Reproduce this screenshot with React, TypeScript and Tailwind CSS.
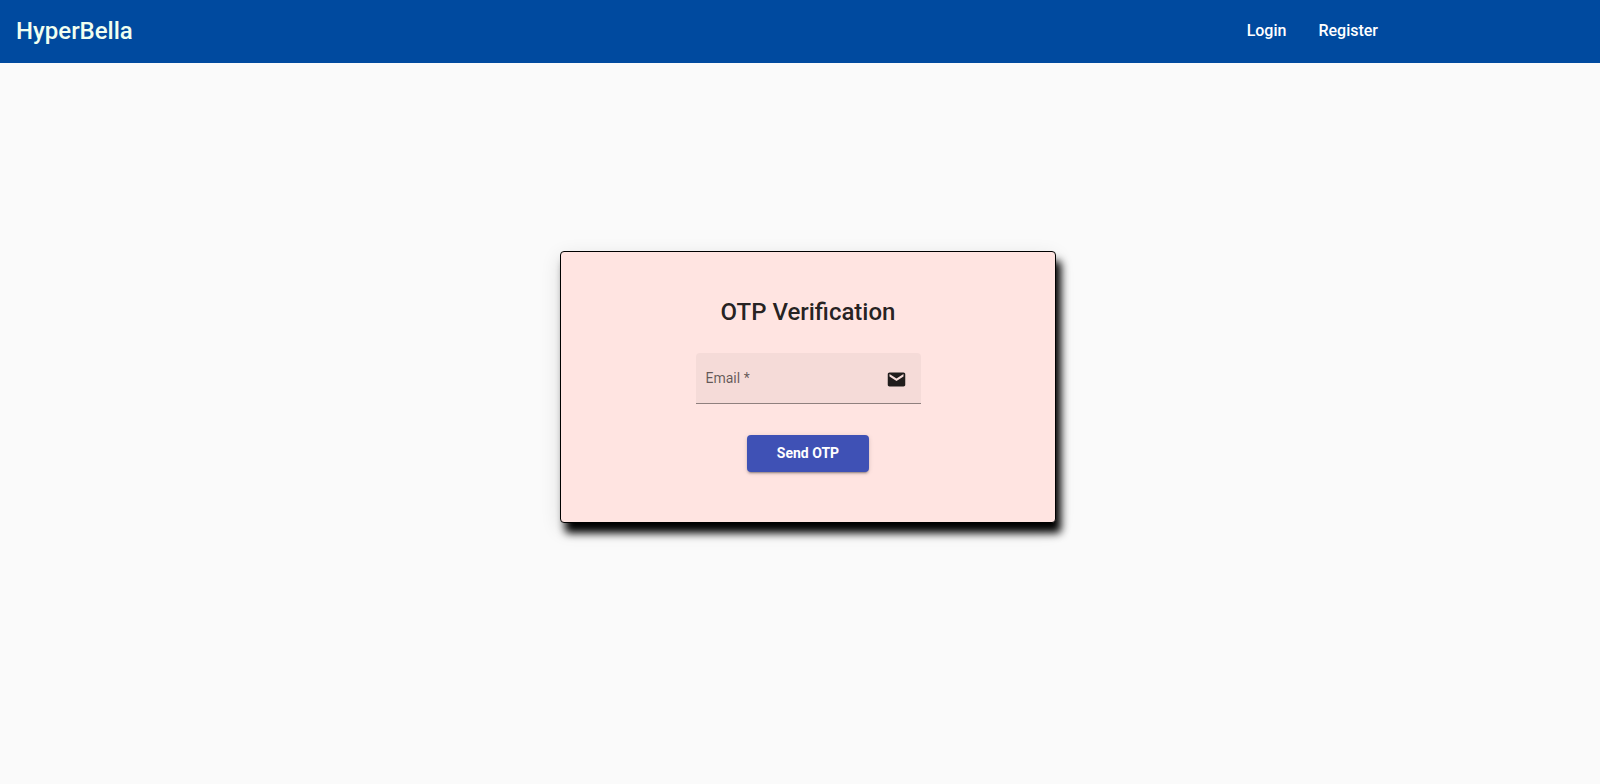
import { useState } from "react";

export default function App() {
  const [email, setEmail] = useState("");
  return (
    <div className="flex min-h-screen flex-col bg-[#fafafa] font-[Roboto,sans-serif] text-black/87">
      <header className="flex h-[63px] items-center bg-[#004a9f] px-4 pb-0.5 text-white">
        <a href="#home" className="text-2xl font-medium text-[#f0fff0]">HyperBella</a>
        <nav className="mr-[206px] ml-auto flex gap-8 text-base font-medium">
          <a href="#login">Login</a>
          <a href="#register">Register</a>
        </nav>
      </header>
      <main className="flex flex-col items-center pt-[188px] pl-4">
        <form
          onSubmit={(event) => event.preventDefault()}
          className="flex w-[496px] flex-col items-center rounded border border-black bg-[#ffe4e1] pt-11 pb-[50px] shadow-[5px_10px_8px_#000,0_6px_20px_rgba(0,0,0,.12)]"
        >
          <h1 className="text-2xl leading-8 font-medium">OTP Verification</h1>
          <div className="mt-[25px] flex h-[51px] w-[225px] items-center rounded-t border-b border-black/42 bg-black/4 pr-3.5 pl-[10px]">
            <label htmlFor="email" className="relative flex-1 text-sm">
              {email === "" && (
                <span className="pointer-events-none absolute inset-y-0 left-0 text-black/60">Email *</span>
              )}
              <input
                id="email"
                type="email"
                required
                value={email}
                onChange={(event) => setEmail(event.target.value)}
                className="block w-full bg-transparent outline-none"
              />
            </label>
            <svg viewBox="0 0 24 24" className="mt-0.5 size-[21px] fill-current" aria-hidden="true">
              <path d="M20 4H4c-1.1 0-1.99.9-1.99 2L2 18c0 1.1.9 2 2 2h16c1.1 0 2-.9 2-2V6c0-1.1-.9-2-2-2zm0 4.6l-8 5-8-5V5.8l8 5 8-5v2.8z" />
            </svg>
          </div>
          <button
            type="submit"
            className="mt-[31px] h-[37px] w-[122px] rounded bg-[#3f51b5] pb-0.5 text-sm font-bold text-white shadow-[0_3px_1px_-2px_rgba(0,0,0,.2),0_2px_2px_rgba(0,0,0,.14),0_1px_5px_rgba(0,0,0,.12)]"
          >
            Send OTP
          </button>
        </form>
      </main>
    </div>
  );
}
